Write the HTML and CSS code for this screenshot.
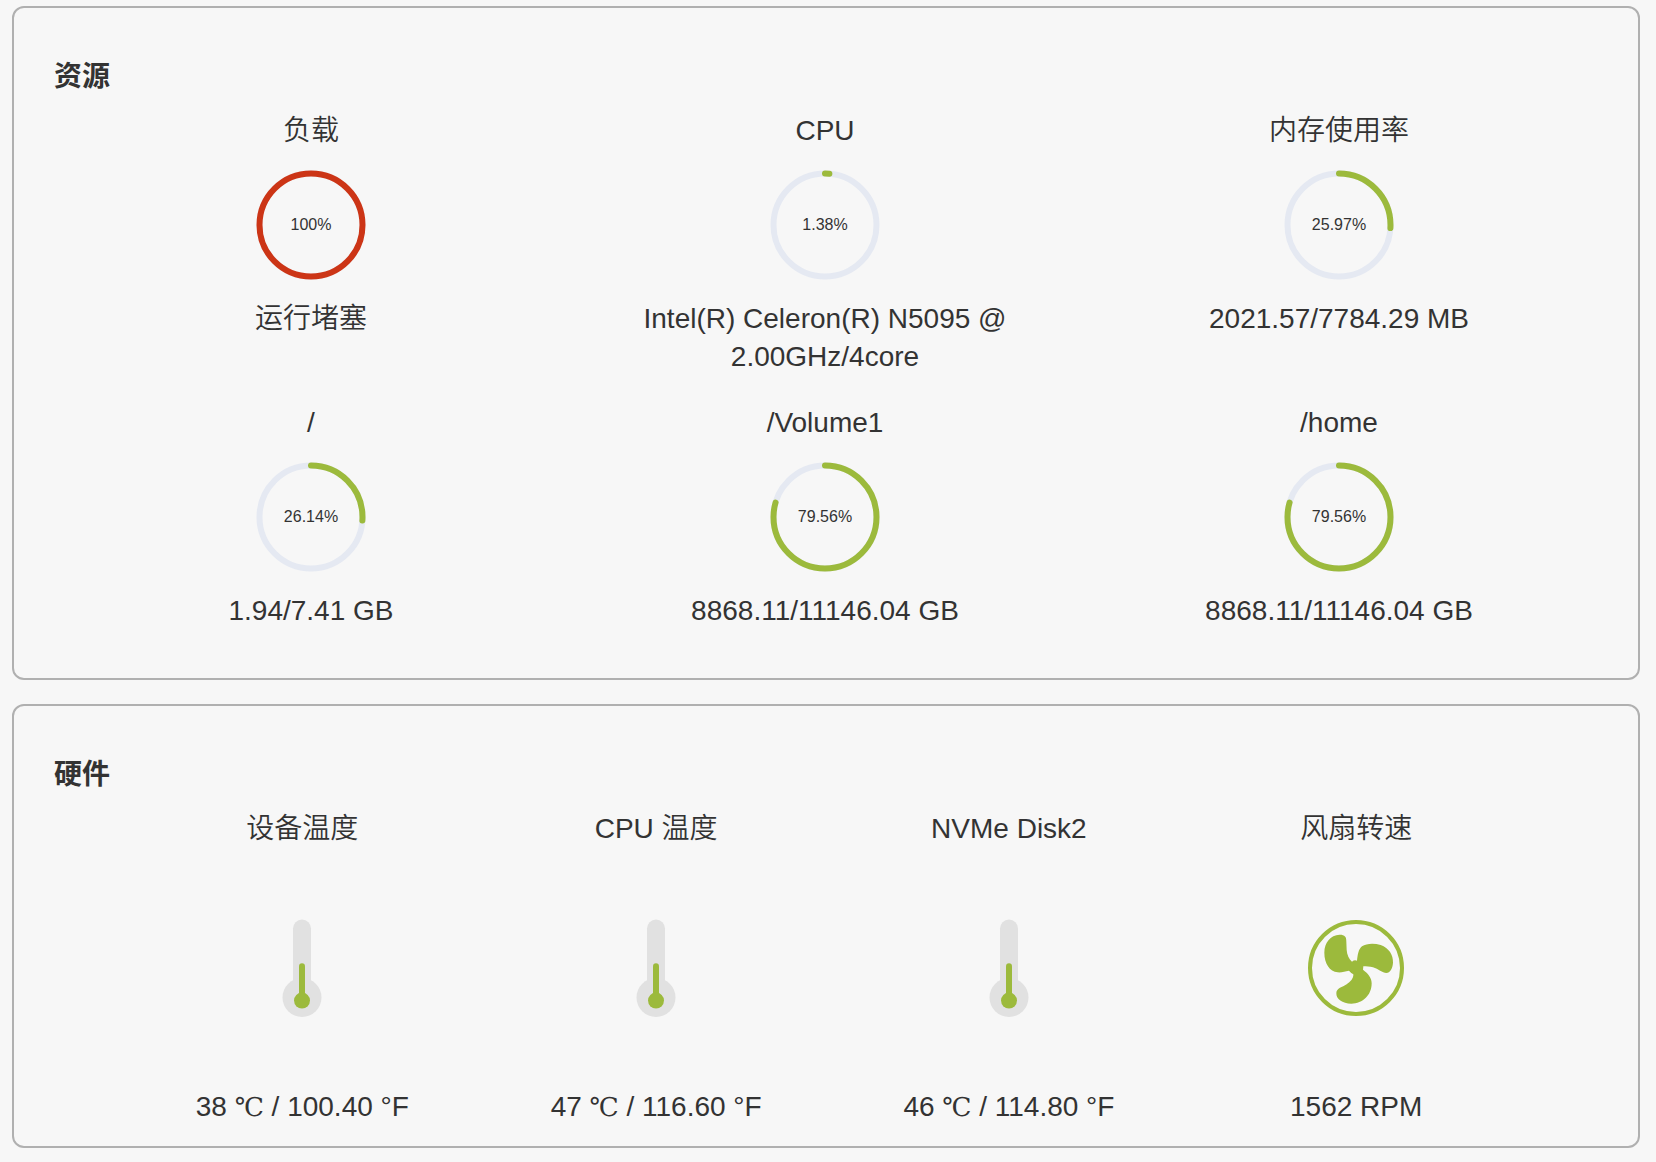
FILE: index.html
```html
<!DOCTYPE html>
<html lang="zh-CN">
<head>
    <meta charset="UTF-8">
    <meta name="viewport" content="width=device-width, initial-scale=1.0">
    <title>资源</title>
    <link rel="stylesheet" href="styles.css">
</head>
<body>
    <svg class="symbols" aria-hidden="true">
        <symbol id="thermometer" viewBox="0 0 200 200">
            <g fill="#e1e1e1">
                <rect x="91" y="51.5" width="18" height="80" rx="9"/>
                <circle cx="100" cy="129.5" r="19.5"/>
            </g>
            <g fill="#9cba3c">
                <rect x="97" y="95.3" width="6" height="36" rx="3"/>
                <circle cx="100" cy="132.6" r="8"/>
            </g>
        </symbol>
        <symbol id="fan" viewBox="-99 -96 600 600">
            <circle cx="201" cy="204" r="138" fill="none" stroke="#9cba3c" stroke-width="12"/>
            <path fill="#9cba3c" d="M172 125 L173 150 C174 165 180 178 189 185 Q196 179 204 182 C206 165 208 148 219 139 C232 130 255 129 275 135 C300 144 313 165 312 188 C311 205 303 219 292 219 C280 219 268 207 252 202 C242 199 232 199 223 199 L222 209 C236 220 248 232 248 250 C248 285 222 311 187 311 C160 311 141 297 142 279 C143 264 160 262 173 253 C184 246 194 235 193 223 Q186 219 180 212 C168 213 160 218 146 217 C122 215 106 190 106 158 C106 128 124 105 152 104 C168 104 172 110 172 125 Z"/>
        </symbol>
    </svg>

    <section class="card">
        <h2>资源</h2>
        <div class="resources">
            <div class="item">
                <div class="label">负载</div>
                <div class="ring full">
                    <svg viewBox="0 0 110 110">
                        <circle class="track" cx="55" cy="55" r="51.5"/>
                        <circle class="bar" cx="55" cy="55" r="51.5" pathLength="100" style="stroke-dasharray: 100 100"/>
                    </svg>
                    <span>100%</span>
                </div>
                <div class="value">运行堵塞</div>
            </div>
            <div class="item">
                <div class="label">CPU</div>
                <div class="ring">
                    <svg viewBox="0 0 110 110">
                        <circle class="track" cx="55" cy="55" r="51.5"/>
                        <circle class="bar" cx="55" cy="55" r="51.5" pathLength="100" style="stroke-dasharray: 1.38 100"/>
                    </svg>
                    <span>1.38%</span>
                </div>
                <div class="value">Intel(R) Celeron(R) N5095 @ 2.00GHz/4core</div>
            </div>
            <div class="item">
                <div class="label">内存使用率</div>
                <div class="ring">
                    <svg viewBox="0 0 110 110">
                        <circle class="track" cx="55" cy="55" r="51.5"/>
                        <circle class="bar" cx="55" cy="55" r="51.5" pathLength="100" style="stroke-dasharray: 25.97 100"/>
                    </svg>
                    <span>25.97%</span>
                </div>
                <div class="value">2021.57/7784.29 MB</div>
            </div>
            <div class="item">
                <div class="label">/</div>
                <div class="ring">
                    <svg viewBox="0 0 110 110">
                        <circle class="track" cx="55" cy="55" r="51.5"/>
                        <circle class="bar" cx="55" cy="55" r="51.5" pathLength="100" style="stroke-dasharray: 26.14 100"/>
                    </svg>
                    <span>26.14%</span>
                </div>
                <div class="value">1.94/7.41 GB</div>
            </div>
            <div class="item">
                <div class="label">/Volume1</div>
                <div class="ring">
                    <svg viewBox="0 0 110 110">
                        <circle class="track" cx="55" cy="55" r="51.5"/>
                        <circle class="bar" cx="55" cy="55" r="51.5" pathLength="100" style="stroke-dasharray: 79.56 100"/>
                    </svg>
                    <span>79.56%</span>
                </div>
                <div class="value">8868.11/11146.04 GB</div>
            </div>
            <div class="item">
                <div class="label">/home</div>
                <div class="ring">
                    <svg viewBox="0 0 110 110">
                        <circle class="track" cx="55" cy="55" r="51.5"/>
                        <circle class="bar" cx="55" cy="55" r="51.5" pathLength="100" style="stroke-dasharray: 79.56 100"/>
                    </svg>
                    <span>79.56%</span>
                </div>
                <div class="value">8868.11/11146.04 GB</div>
            </div>
        </div>
    </section>

    <section class="card card-hardware">
        <h2>硬件</h2>
        <div class="hardware">
            <div class="item">
                <div class="label">设备温度</div>
                <svg class="icon"><use href="#thermometer"/></svg>
                <div class="value">38 <span class="unit">℃</span> / 100.40 °F</div>
            </div>
            <div class="item">
                <div class="label">CPU 温度</div>
                <svg class="icon"><use href="#thermometer"/></svg>
                <div class="value">47 <span class="unit">℃</span> / 116.60 °F</div>
            </div>
            <div class="item">
                <div class="label">NVMe Disk2</div>
                <svg class="icon"><use href="#thermometer"/></svg>
                <div class="value">46 <span class="unit">℃</span> / 114.80 °F</div>
            </div>
            <div class="item">
                <div class="label">风扇转速</div>
                <svg class="icon"><use href="#fan"/></svg>
                <div class="value">1562 RPM</div>
            </div>
        </div>
    </section>
</body>
</html>
```
FILE: styles.css
```css
* {
    box-sizing: border-box;
}
body {
    margin: 0;
    padding: 6px 16px 14px 12px;
    background-color: #f7f7f7;
    color: #333;
    font-family: "Liberation Sans", "Noto Sans CJK SC", sans-serif;
    font-size: 28px;
    font-weight: 350;
    line-height: 38px;
}
.symbols {
    display: none;
}
.card {
    padding: 50px 42px 48px 40px;
    border: 2px solid #b0b0b0;
    border-radius: 12px;
}
.card + .card {
    margin-top: 24px;
}
.card-hardware {
    padding-right: 40px;
    padding-bottom: 20px;
}
h2 {
    margin: 0 0 16px;
    font-size: 28px;
    font-weight: bold;
}
.resources {
    display: grid;
    grid-template-columns: repeat(3, 1fr);
    row-gap: 28px;
}
.hardware {
    display: flex;
    justify-content: space-evenly;
}
.item {
    display: flex;
    flex-direction: column;
    align-items: center;
    text-align: center;
}
.resources .value {
    max-width: 400px;
}

/* progress circle */
.ring {
    display: grid;
    place-items: center;
    margin: 20px 0;
}
.ring svg,
.ring span {
    grid-area: 1 / 1;
}
.ring svg {
    width: 110px;
    height: 110px;
    transform: rotate(-90deg);
}
.ring span {
    font-size: 16px;
    line-height: 20px;
}
.track,
.bar {
    fill: none;
    stroke-width: 6;
}
.track {
    stroke: #e5e9f2;
}
.bar {
    stroke: #9cba3c;
    stroke-linecap: round;
}
.full .bar {
    stroke: #cc3516;
}

.icon {
    width: 200px;
    height: 200px;
    margin: 20px 0;
}
.unit {
    font-family: "DejaVu Serif", serif;
    font-size: 26px;
}
```
